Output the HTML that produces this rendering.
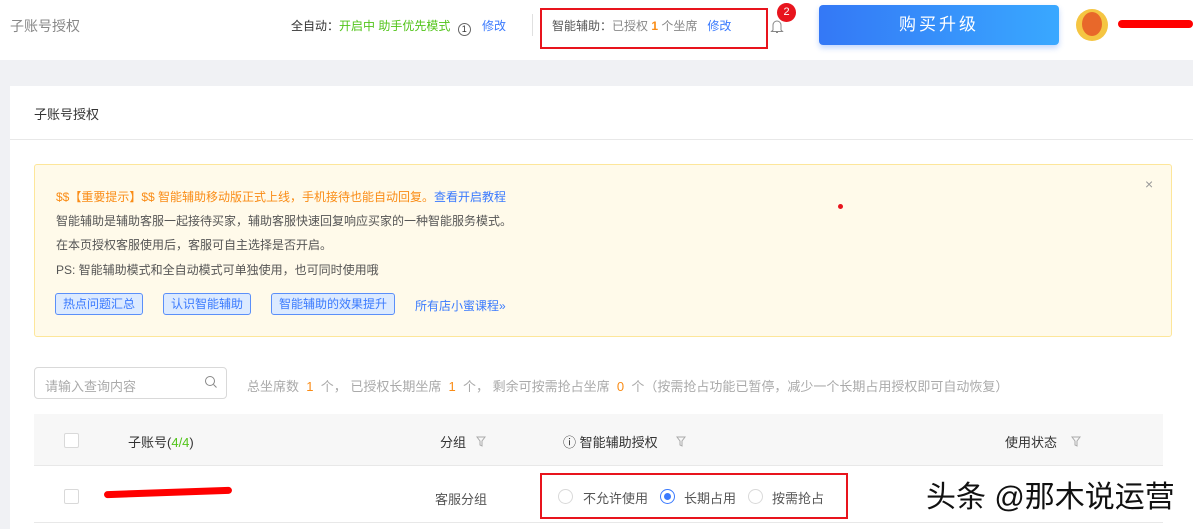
<!DOCTYPE html>
<html><head><meta charset="utf-8"><style>
*{margin:0;padding:0;box-sizing:border-box}
body{width:1193px;height:529px;overflow:hidden;background:#f0f1f4;font-family:"Liberation Sans","Noto Sans CJK SC",sans-serif;font-size:12px;color:#333;position:relative}
.a{position:absolute;white-space:nowrap}
.hdr{position:absolute;left:0;top:0;width:1193px;height:60px;background:#fff}
.card{position:absolute;left:10px;top:86px;width:1183px;height:443px;background:#fff}
.btn{position:absolute;top:293px;height:22px;border:1px solid #5b8ff9;background:#dceaff;color:#3a7afe;border-radius:3px;font-size:12px;line-height:20px;padding:0 7px}
.cb{position:absolute;width:15px;height:15px;border:1px solid #d9d9d9;border-radius:2px;background:#fff}
.rd{position:absolute;width:15px;height:15px;border:1px solid #d9d9d9;border-radius:50%;background:#fff}
.flt{position:absolute;width:10px;height:11px}
</style></head><body>
<div class="hdr"></div>
<div class="a" style="left:10px;top:16px;font-size:14px;color:#888">子账号授权</div>
<div class="a" style="left:291px;top:17px;color:#333">全自动：<span style="color:#52c41a">开启中 助手优先模式</span> <span style="display:inline-block;width:13px;height:13px;border:1px solid #666;border-radius:50%;font-size:9px;line-height:11px;text-align:center;vertical-align:-2px;margin:0 4px">1</span> <span style="color:#3a7afe;margin-left:4px">修改</span></div>
<div class="a" style="left:532px;top:14px;width:1px;height:22px;background:#e0e0e0"></div>
<div class="a" style="left:540px;top:8px;width:228px;height:41px;border:2px solid #e8141d"></div>
<div class="a" style="left:552px;top:17px;color:#555">智能辅助：<span style="color:#888">已授权 <b style="color:#fa8c16">1</b> 个坐席</span>&nbsp;&nbsp; <span style="color:#3a7afe">修改</span></div>
<svg class="a" style="left:770px;top:18px" width="14" height="16" viewBox="0 0 14 16"><path d="M3 12V7a4 4 0 0 1 8 0v5l1.5 1.5h-11z M6 14.5h2" fill="none" stroke="#888" stroke-width="1"/></svg>
<div class="a" style="left:777px;top:3px;width:19px;height:19px;border-radius:50%;background:#e8141d;color:#fff;font-size:11px;text-align:center;line-height:19px">2</div>
<div class="a" style="left:819px;top:5px;width:240px;height:40px;border-radius:4px;background:linear-gradient(90deg,#3478f6,#39a8ff);box-shadow:0 3px 6px rgba(52,120,246,.3);color:#fff;font-size:17px;text-align:center;line-height:40px;letter-spacing:3px">购买升级</div>
<div class="a" style="left:1076px;top:9px;width:32px;height:32px;border-radius:50%;background:#f5c542"></div>
<div class="a" style="left:1082px;top:12px;width:20px;height:24px;border-radius:50%;background:#e8682a"></div>
<div class="a" style="left:1118px;top:20px;width:75px;height:8px;border-radius:4px;background:#f00"></div>
<div class="card"></div>
<div class="a" style="left:34px;top:104px;font-size:13px;color:#333">子账号授权</div>
<div class="a" style="left:10px;top:139px;width:1183px;height:1px;background:#e8e8e8"></div>
<div class="a" style="left:34px;top:164px;width:1138px;height:173px;background:#fffaea;border:1px solid #fde69a;border-radius:3px"></div>
<div class="a" style="left:1145px;top:176px;color:#999;font-size:14px">×</div>
<div class="a" style="left:838px;top:204px;width:5px;height:5px;border-radius:50%;background:#e8141d"></div>
<div class="a" style="left:56px;top:188px;color:#fa8c16">$$【重要提示】$$ 智能辅助移动版正式上线，手机接待也能自动回复。<span style="color:#3a7afe">查看开启教程</span></div>
<div class="a" style="left:56px;top:212px;color:#555">智能辅助是辅助客服一起接待买家，辅助客服快速回复响应买家的一种智能服务模式。</div>
<div class="a" style="left:56px;top:236px;color:#555">在本页授权客服使用后，客服可自主选择是否开启。</div>
<div class="a" style="left:56px;top:261px;color:#555">PS: 智能辅助模式和全自动模式可单独使用，也可同时使用哦</div>
<div class="btn" style="left:55px">热点问题汇总</div>
<div class="btn" style="left:163px">认识智能辅助</div>
<div class="btn" style="left:271px">智能辅助的效果提升</div>
<div class="a" style="left:415px;top:297px;color:#3a7afe">所有店小蜜课程»</div>
<div class="a" style="left:34px;top:367px;width:193px;height:32px;border:1px solid #d9d9d9;border-radius:4px;background:#fff"></div>
<div class="a" style="left:45px;top:376px;color:#aaa;font-size:13px">请输入查询内容</div>
<svg class="a" style="left:204px;top:375px" width="14" height="14" viewBox="0 0 14 14"><circle cx="6" cy="6" r="4.5" fill="none" stroke="#888"/><path d="M9.5 9.5l3 3" stroke="#888"/></svg>
<div class="a" style="left:247px;top:376px;color:#aaa;font-size:13px">总坐席数 <span style="color:#fa8c16">&nbsp;1&nbsp;</span> 个， 已授权长期坐席 <span style="color:#fa8c16">&nbsp;1&nbsp;</span> 个， 剩余可按需抢占坐席 <span style="color:#fa8c16">&nbsp;0&nbsp;</span> 个（按需抢占功能已暂停，减少一个长期占用授权即可自动恢复）</div>
<div class="a" style="left:34px;top:414px;width:1129px;height:52px;background:#f7f7f7;border-bottom:1px solid #e8e8e8"></div>
<div class="cb" style="left:64px;top:433px"></div>
<div class="a" style="left:128px;top:432px;font-size:13px">子账号(<span style="color:#52c41a">4/4</span>)</div>
<div class="a" style="left:440px;top:432px;font-size:13px">分组</div>
<div class="a" style="left:563px;top:432px;font-size:13px">ⓘ 智能辅助授权</div>
<div class="a" style="left:1005px;top:432px;font-size:13px">使用状态</div>
<svg class="a flt" style="left:476px;top:436px" viewBox="0 0 10 11"><path d="M1 1h8L6 5v5L4 9V5z" fill="none" stroke="#aaa"/></svg>
<svg class="a flt" style="left:676px;top:436px" viewBox="0 0 10 11"><path d="M1 1h8L6 5v5L4 9V5z" fill="none" stroke="#aaa"/></svg>
<svg class="a flt" style="left:1071px;top:436px" viewBox="0 0 10 11"><path d="M1 1h8L6 5v5L4 9V5z" fill="none" stroke="#aaa"/></svg>
<div class="a" style="left:34px;top:522px;width:1129px;height:1px;background:#e8e8e8"></div>
<div class="cb" style="left:64px;top:489px"></div>
<div class="a" style="left:104px;top:489px;width:128px;height:7px;border-radius:4px;background:#f00;transform:rotate(-2deg)"></div>
<div class="a" style="left:435px;top:489px;font-size:13px;color:#555">客服分组</div>
<div class="a" style="left:540px;top:473px;width:308px;height:46px;border:2px solid #e8141d"></div>
<div class="rd" style="left:558px;top:489px"></div>
<div class="a" style="left:583px;top:488px;font-size:13px;color:#555">不允许使用</div>
<div class="rd" style="left:660px;top:489px;border-color:#3a7afe"><div style="position:absolute;left:3px;top:3px;width:7px;height:7px;border-radius:50%;background:#3a7afe"></div></div>
<div class="a" style="left:684px;top:488px;font-size:13px;color:#555">长期占用</div>
<div class="rd" style="left:748px;top:489px"></div>
<div class="a" style="left:772px;top:488px;font-size:13px;color:#555">按需抢占</div>
<div class="a" style="left:926px;top:480px;font-size:30px;line-height:36px;color:#111;text-shadow:0 0 2px #fff,1px 1px 0 #fff">头条 @那木说运营</div>
</body></html>
